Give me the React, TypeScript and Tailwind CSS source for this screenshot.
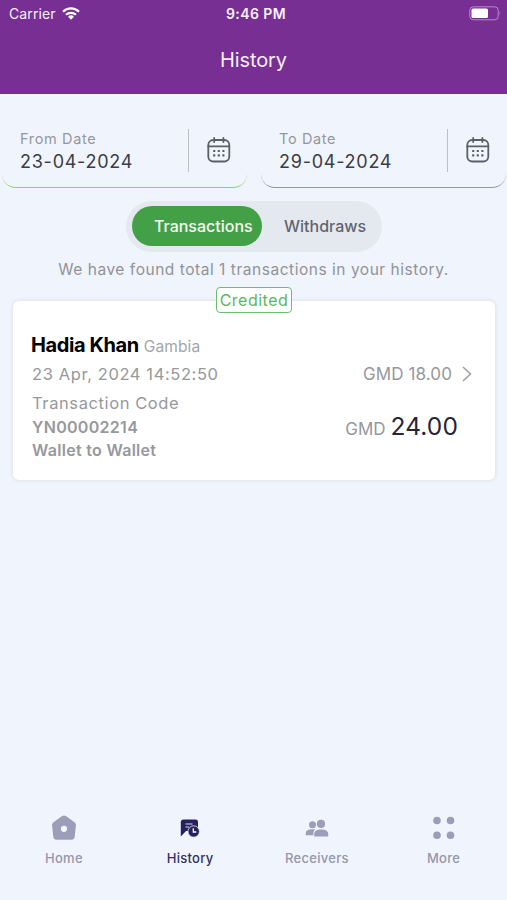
import React from "react";

function CalendarIcon() {
  return (
    <svg width="24" height="26" viewBox="0 0 24 26" fill="none" stroke="#5d5f66" strokeWidth="1.8" strokeLinecap="round">
      <rect x="1.3" y="3" width="21" height="21.5" rx="5" />
      <path d="M1.3 9.4H22.3M7.2 1v4M16.4 1v4" />
      <g fill="#5d5f66" stroke="none">
        {[7.2, 11.8, 16.4].map((x) =>
          [14, 18.3].map((y) => <rect key={`${x}-${y}`} x={x - 1.1} y={y - 1.1} width="2.2" height="2.2" rx="0.5" />),
        )}
      </g>
    </svg>
  );
}

type DateFieldProps = { label: string; value: string; border: string };

function DateField({ label, value, border }: DateFieldProps) {
  return (
    <div className={`flex h-[75px] w-[245px] rounded-b-[14px] border-b-[1.5px] pl-[18px] pt-[15px] ${border}`}>
      <div className="w-[168px] shrink-0">
        <div className="mt-px text-[14.5px] leading-[20px] tracking-[0.65px] text-[#95979c]">{label}</div>
        <div className="mt-[1px] text-[18px] leading-[24px] tracking-[0.75px] text-[#3b3c46]">{value}</div>
      </div>
      <div className="mt-px h-[43px] w-px bg-[#bdbfc4]" />
      <div className="ml-[18px] mt-[9px]">
        <CalendarIcon />
      </div>
    </div>
  );
}

function StatusBar() {
  return (
    <div className="flex h-[27px] items-center justify-between pl-[9px] pr-[5px] text-[#f8f0fa]">
      <div className="flex w-[161px] items-center gap-[6px] text-[14px] tracking-[0.1px]">
        <span>Carrier</span>
        <svg width="18" height="13" viewBox="0 0 18 13" fill="none" stroke="white" strokeWidth="2.2">
          <path d="M1 4.7a11.5 11.5 0 0 1 16 0M4 7.8a7.2 7.2 0 0 1 10 0" />
          <path d="M6 9.8a4.3 4.3 0 0 1 6 0l-3 3z" fill="white" stroke="none" />
        </svg>
      </div>
      <span className="text-[14px] font-semibold tracking-[0.4px]">9:46 PM</span>
      <div className="flex w-[160px] justify-end">
        <svg width="33" height="15" viewBox="0 0 33 15" fill="none">
          <rect x="0.8" y="0.8" width="28.4" height="13" rx="3.5" stroke="#b98bc9" />
          <rect x="2.5" y="2.6" width="16.5" height="9.4" rx="1.5" fill="white" />
          <path d="M30.6 5.3q1.8 2 0 4z" fill="#b98bc9" />
        </svg>
      </div>
    </div>
  );
}

function HomeIcon() {
  return (
    <svg width="26" height="26" viewBox="0 0 26 26">
      <path
        d="M10.8 1.3q2.2-1.5 4.4 0l8.3 5.9q1.7 1.3 1.4 3.3l-1.2 11.2q-.4 3-3.4 3H5.7q-3 0-3.4-3L1.1 10.5q-.3-2 1.4-3.3z"
        fill="#9b9eb8"
      />
      <circle cx="13" cy="13.8" r="3.1" fill="#f5f7fe" />
    </svg>
  );
}

function HistoryIcon() {
  return (
    <svg width="20" height="19" viewBox="0 0 20 19">
      <path d="M3.500 .5h12q2.500 0 2.500 2.500v9H6L.8 17.500V3.500q0-3 2.700-3z" fill="#26205f" />
      <path d="M5.500 5h7M5.500 8h3.500" stroke="#d9dbec" strokeWidth="1.2" />
      <circle cx="13.700" cy="12.500" r="5.700" fill="#26205f" stroke="#f0f4fc" strokeWidth="0.8" />
      <path d="M13.300 9.300v3.700h3" fill="none" stroke="white" strokeWidth="1.3" />
    </svg>
  );
}

function ReceiversIcon() {
  return (
    <svg width="24" height="19" viewBox="0 0 24 19" fill="#9b9eb8">
      <circle cx="7.5" cy="5.7" r="3.5" />
      <path d="M.8 16.200v-2c0-3 3-4 6.500-4q1.700 0 3 .4Q8.300 12 8.300 14.500v1.700z" />
      <circle cx="16" cy="4.900" r="4.100" />
      <path d="M9.200 17.500v-2.300c0-3.300 3-4.700 7-4.700s7 1.400 7 4.700v2.300z" />
    </svg>
  );
}

function MoreIcon() {
  return (
    <svg width="24" height="24" viewBox="0 0 24 24" fill="#9b9eb8">
      <circle cx="5" cy="4.5" r="3.8" />
      <circle cx="18.5" cy="4.5" r="3.8" />
      <circle cx="5" cy="19.3" r="3.8" />
      <circle cx="18.5" cy="19.3" r="3.8" />
    </svg>
  );
}

const tabs = [
  { label: "Home", icon: <HomeIcon />, style: "pl-[1px] text-[#9597ab]" },
  { label: "History", icon: <HistoryIcon />, style: "text-[#35305f]" },
  { label: "Receivers", icon: <ReceiversIcon />, style: "text-[#9597ab]" },
  { label: "More", icon: <MoreIcon />, style: "text-[#9597ab]" },
];

export default function App() {
  return (
    <div className="flex h-[900px] w-[507px] flex-col overflow-hidden bg-[#f0f4fc] font-['Inter',sans-serif]">
      <header className="h-[94px] bg-[#772f94]">
        <StatusBar />
        <h1 className="mt-[19px] text-center text-[20px] leading-[28px] tracking-[-0.1px] text-[#f6edf8]">History</h1>
      </header>

      <div className="mt-[19px] flex shrink-0 gap-[14px] pl-[2px]">
        <DateField label="From Date" value="23-04-2024" border="border-[#8fcf7c]" />
        <DateField label="To Date" value="29-04-2024" border="border-[#94969b]" />
      </div>

      <div className="ml-[126px] mt-[13px] flex h-[51px] w-[256px] items-center rounded-full bg-[#e4e9f0] pl-[6px] text-[16px] font-medium">
        <div className="-mt-px flex h-[40px] w-[130px] items-center rounded-full bg-[#43a047] pl-[22px] text-[#f4fbf4]">Transactions</div>
        <div className="-mt-px pl-[22px] text-[#62646d]">Withdraws</div>
      </div>

      <p className="mt-[7px] text-center text-[15.5px] leading-[22px] tracking-[0.53px] text-[#919398]">
        We have found total 1 transactions in your history.
      </p>

      <section className="relative ml-[13px] mt-[20px] h-[179px] w-[482px] shrink-0 rounded-[6px] bg-white px-[19px] pt-[31px] shadow-[0_0_4px_rgba(60,70,90,0.14)]">
        <div className="absolute left-[203px] top-[-14px] flex h-[26px] w-[76px] items-center justify-center rounded-[4px] border-[1.5px] border-[#6abf6e] bg-white text-[16px] tracking-[0.5px] text-[#5bb75f]">
          Credited
        </div>
        <div className="-ml-px flex items-baseline gap-[5px] leading-[26px]">
          <span className="text-[20px] font-bold tracking-[-0.4px] text-black">Hadia Khan</span>
          <span className="text-[15.5px] tracking-[0.1px] text-[#a3a5aa]">Gambia</span>
        </div>
        <div className="mt-[2px] flex h-[24px] items-center justify-between text-[16.5px] text-[#96989c]">
          <span className="tracking-[0.6px]">23 Apr, 2024 14:52:50</span>
          <span className="flex items-center text-[17px]">
            <span className="pt-[2px] tracking-[0.1px]">GMD 18.00</span>
            <svg className="ml-[9px] mr-[3px]" width="12" height="18" viewBox="0 0 12 18" fill="none" stroke="#9c9ea3" strokeWidth="1.5">
              <path d="M2 2l7.500 7L2 16" />
            </svg>
          </span>
        </div>
        <div className="flex justify-between pt-[5px] text-[#96989c]">
          <div>
            <div className="text-[16.5px] leading-[24px] tracking-[0.6px]">Transaction Code</div>
            <div className="mt-px text-[16px] font-semibold leading-[23px] tracking-[0.3px]">YN00002214</div>
            <div className="text-[16px] font-semibold leading-[23px] tracking-[0.3px]">Wallet to Wallet</div>
          </div>
          <div className="mr-[18px] mt-[19px] flex items-baseline gap-[5px] leading-[32px]">
            <span className="text-[17px]">GMD</span>
            <span className="text-[24.5px] tracking-[0.1px] text-[#272439]">24.00</span>
          </div>
        </div>
      </section>

      <nav className="mt-auto grid h-[90px] grid-cols-4 pb-[31px]">
        {tabs.map((tab) => (
          <div key={tab.label} className={`flex flex-col items-center text-[13px] font-medium leading-[18px] tracking-[0.3px] ${tab.style}`}>
            <div className="flex h-[36px] items-center justify-center">{tab.icon}</div>
            <span className="mt-[3px]">{tab.label}</span>
          </div>
        ))}
      </nav>
    </div>
  );
}
